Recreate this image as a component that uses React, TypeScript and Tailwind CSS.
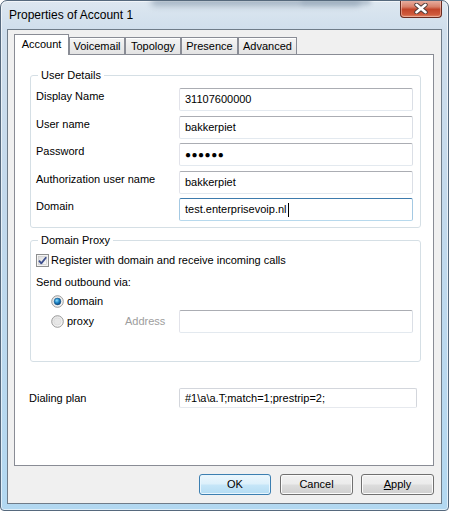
import React from "react";

const font = { fontFamily: '"Liberation Sans", Arial, sans-serif' };

const tabs = [
  { label: "Account", w: "w-[55px]", active: true },
  { label: "Voicemail", w: "w-[56px]" },
  { label: "Topology", w: "w-[56px]" },
  { label: "Presence", w: "w-[57px]" },
  { label: "Advanced", w: "w-[59px]" },
];

const inputCls =
  "flex h-[23px] w-[234px] items-center rounded-[2px] border border-[#abadb3] border-b-[#e3e9ef] border-l-[#e2e3ea] border-r-[#dbdfe6] bg-white px-[5px] text-[11px] text-black";

function Field({ label, children, focused }: { label: string; children: React.ReactNode; focused?: boolean }) {
  return (
    <div className="flex h-[23px] items-start">
      <span className="mt-[2px] w-[143px] text-[11px] leading-[13px] text-black">{label}</span>
      <div
        className={
          focused
            ? "flex h-[23px] w-[234px] items-center rounded-[2px] border border-[#3d7bad] border-b-[#b7d9ed] border-l-[#a4c9e3] border-r-[#a4c9e3] bg-white px-[5px] text-[11px] text-black"
            : inputCls
        }
      >
        {children}
      </div>
    </div>
  );
}

function Checkbox() {
  return (
    <svg width="13" height="13" viewBox="0 0 13 13">
      <defs>
        <linearGradient id="cbg" x1="0" y1="0" x2="1" y2="1">
          <stop offset="0" stopColor="#dcdcdc" />
          <stop offset="1" stopColor="#fbfbfb" />
        </linearGradient>
      </defs>
      <rect x="0.5" y="0.5" width="12" height="12" fill="#f4f4f4" stroke="#8e8f8f" />
      <rect x="2.5" y="2.5" width="8" height="8" fill="url(#cbg)" stroke="#c5c5c5" strokeWidth="0.6" />
      <path d="M3 6.6 L5.3 9.4 L10.2 3.2" fill="none" stroke="#3d4f8e" strokeWidth="1.8" strokeLinejoin="round" />
    </svg>
  );
}

function Radio({ checked }: { checked?: boolean }) {
  return (
    <svg width="13" height="13" viewBox="0 0 13 13">
      <defs>
        <linearGradient id="rOut" x1="0" y1="0" x2="1" y2="1">
          <stop offset="0" stopColor="#e2e2e2" />
          <stop offset="1" stopColor="#fafafa" />
        </linearGradient>
        <radialGradient id="rDot" cx="0.4" cy="0.35" r="0.7">
          <stop offset="0" stopColor="#8fe0ff" />
          <stop offset="0.5" stopColor="#1b83c4" />
          <stop offset="1" stopColor="#0a3f73" />
        </radialGradient>
      </defs>
      <circle cx="6.5" cy="6.5" r="5.8" fill="url(#rOut)" stroke="#8f8f8f" strokeWidth="0.9" />
      {checked ? (
        <circle cx="6.5" cy="6.5" r="3.4" fill="url(#rDot)" stroke="#164f7e" strokeWidth="0.5" />
      ) : (
        <circle cx="6.5" cy="6.5" r="3.6" fill="#e7e7e7" stroke="#d0d0d0" strokeWidth="0.5" />
      )}
    </svg>
  );
}

function Button({ children, primary, w }: { children: React.ReactNode; primary?: boolean; w: string }) {
  return (
    <button
      className={`${w} flex h-[21px] items-center justify-center rounded-[3px] border text-[11px] text-black ${
        primary
          ? "border-[#3c7fb1] bg-[linear-gradient(to_bottom,#ecf7fd_0%,#dcf0fb_48%,#c6e6f8_52%,#b4dcf3_100%)] shadow-[inset_0_0_0_1px_#e8f6fe]"
          : "border-[#707070] bg-[linear-gradient(to_bottom,#f2f2f2_0%,#ebebeb_48%,#dddddd_52%,#cfcfcf_100%)] shadow-[inset_0_0_0_1px_#fbfbfb]"
      }`}
    >
      {children}
    </button>
  );
}

export default function App() {
  return (
    <div className="h-[511px] w-[449px] bg-white" style={font}>
      <div className="relative flex h-[511px] w-[449px] flex-col overflow-hidden rounded-t-[7px] rounded-b-[4px] border border-[#56697d] bg-[linear-gradient(to_bottom,#dde7f0_0px,#cfdeec_30px,#c3d9ec_200px,#b2d8f1_511px)] shadow-[inset_0_0_0_1px_rgba(255,255,255,0.6)]">
        {/* blurred glass haze behind the title */}
        <div className="pointer-events-none absolute left-[150px] top-[-4px] h-[9px] w-[210px] rounded-full bg-[#6f849b] opacity-50 blur-[3px]" />
        <div className="pointer-events-none absolute left-[300px] top-[-3px] h-[7px] w-[70px] rounded-full bg-[#9aaabb] opacity-60 blur-[2px]" />

        {/* title bar */}
        <div className="relative flex h-[28px] items-center pl-[8px] pb-[1px] text-[12px] text-black">
          Properties of Account 1
        </div>
        <div className="absolute right-[6px] top-[-1px] flex h-[18px] w-[42px] items-center justify-center rounded-b-[4px] border border-t-0 border-[#6a2b20] bg-[linear-gradient(to_bottom,#eab4a6_0%,#d8806a_40%,#c2452a_55%,#cf5a3c_85%,#e18a6a_100%)] shadow-[inset_0_0_0_1px_rgba(255,220,210,0.45)]">
          <svg width="14" height="11" viewBox="0 0 14 11">
            <path d="M2.5 1.8 L11.5 9.2 M11.5 1.8 L2.5 9.2" stroke="#4a3a38" strokeWidth="4.4" strokeLinecap="round" />
            <path d="M2.5 1.8 L11.5 9.2 M11.5 1.8 L2.5 9.2" stroke="#ffffff" strokeWidth="2.6" strokeLinecap="round" />
          </svg>
        </div>

        {/* client area */}
        <div className="ml-[6px] flex h-[475px] w-[435px] flex-col border border-[#6f7c89] bg-[#f0f0f0]">
          {/* tab strip */}
          <div className="ml-[6px] mt-[5px] flex h-[19px] items-end">
            {tabs.map((t) =>
              t.active ? (
                <div
                  key={t.label}
                  className={`${t.w} relative z-10 -mb-px flex h-[21px] items-start justify-center border border-b-0 border-[#898c95] bg-white pt-[3px] text-[11px] leading-[13px]`}
                >
                  {t.label}
                </div>
              ) : (
                <div
                  key={t.label}
                  className={`${t.w} flex h-[17px] items-center justify-center border border-b-0 border-[#898c95] bg-[linear-gradient(to_bottom,#f4f4f4,#e3e3e3)] text-[11px] leading-[13px] shadow-[inset_0_1px_0_#ffffff]`}
                >
                  {t.label}
                </div>
              )
            )}
          </div>

          {/* tab page */}
          <div className="ml-[6px] flex h-[412px] w-[420px] flex-col border border-[#898c95] bg-white">
            <fieldset className="ml-[15px] mt-[13px] w-[391px] rounded-[3px] border border-[#d5dfe5] pb-[6px] pl-[5px]">
              <legend className="ml-[2px] px-[3px] text-[11px] leading-[14px] text-black">User Details</legend>
              <div className="mt-[6px] flex flex-col gap-[4.5px]">
                <Field label="Display Name">31107600000</Field>
                <Field label="User name">bakkerpiet</Field>
                <Field label="Password">
                  <span className="text-[10px] tracking-[0.5px]">●●●●●●</span>
                </Field>
                <Field label="Authorization user name">bakkerpiet</Field>
                <Field label="Domain" focused>
                  test.enterprisevoip.nl
                  <span className="ml-px inline-block h-[14px] w-px bg-black" />
                </Field>
              </div>
            </fieldset>

            <fieldset className="ml-[15px] mt-[5px] w-[391px] rounded-[3px] border border-[#d5dfe5] pb-[28px] pl-[5px]">
              <legend className="ml-[2px] px-[3px] text-[11px] leading-[14px] text-black">Domain Proxy</legend>
              <div className="mt-[7px] flex h-[13px] items-center gap-[2px] text-[11px]">
                <Checkbox />
                <span>Register with domain and receive incoming calls</span>
              </div>
              <div className="mt-[9px] h-[13px] text-[11px] leading-[13px]">Send outbound via:</div>
              <div className="ml-[15px] mt-[6px] flex h-[13px] items-center gap-[3px] text-[11px]">
                <Radio checked />
                <span>domain</span>
              </div>
              <div className="ml-[15px] mt-[2px] flex h-[23px] items-center text-[11px]">
                <Radio />
                <span className="ml-[3px] w-[58px]">proxy</span>
                <span className="w-[54px] text-[#9d9d9d]">Address</span>
                <div className={inputCls} />
              </div>
            </fieldset>

            <div className="ml-[14px] mt-[26px] flex h-[20px] items-center text-[11px]">
              <span className="w-[150px]">Dialing plan</span>
              <div className="flex h-[20px] w-[238px] items-center rounded-[2px] border border-[#d3d6dc] border-b-[#e6e9ee] bg-white px-[5px]">
                #1\a\a.T;match=1;prestrip=2;
              </div>
            </div>
          </div>

          {/* buttons */}
          <div className="mr-[7px] mt-[8px] flex justify-end gap-[8px]">
            <Button primary w="w-[72px]">
              OK
            </Button>
            <div className="ml-px">
              <Button w="w-[73px]">Cancel</Button>
            </div>
            <Button w="w-[73px]">
              <span>
                <span className="underline">A</span>pply
              </span>
            </Button>
          </div>
        </div>
      </div>
    </div>
  );
}
